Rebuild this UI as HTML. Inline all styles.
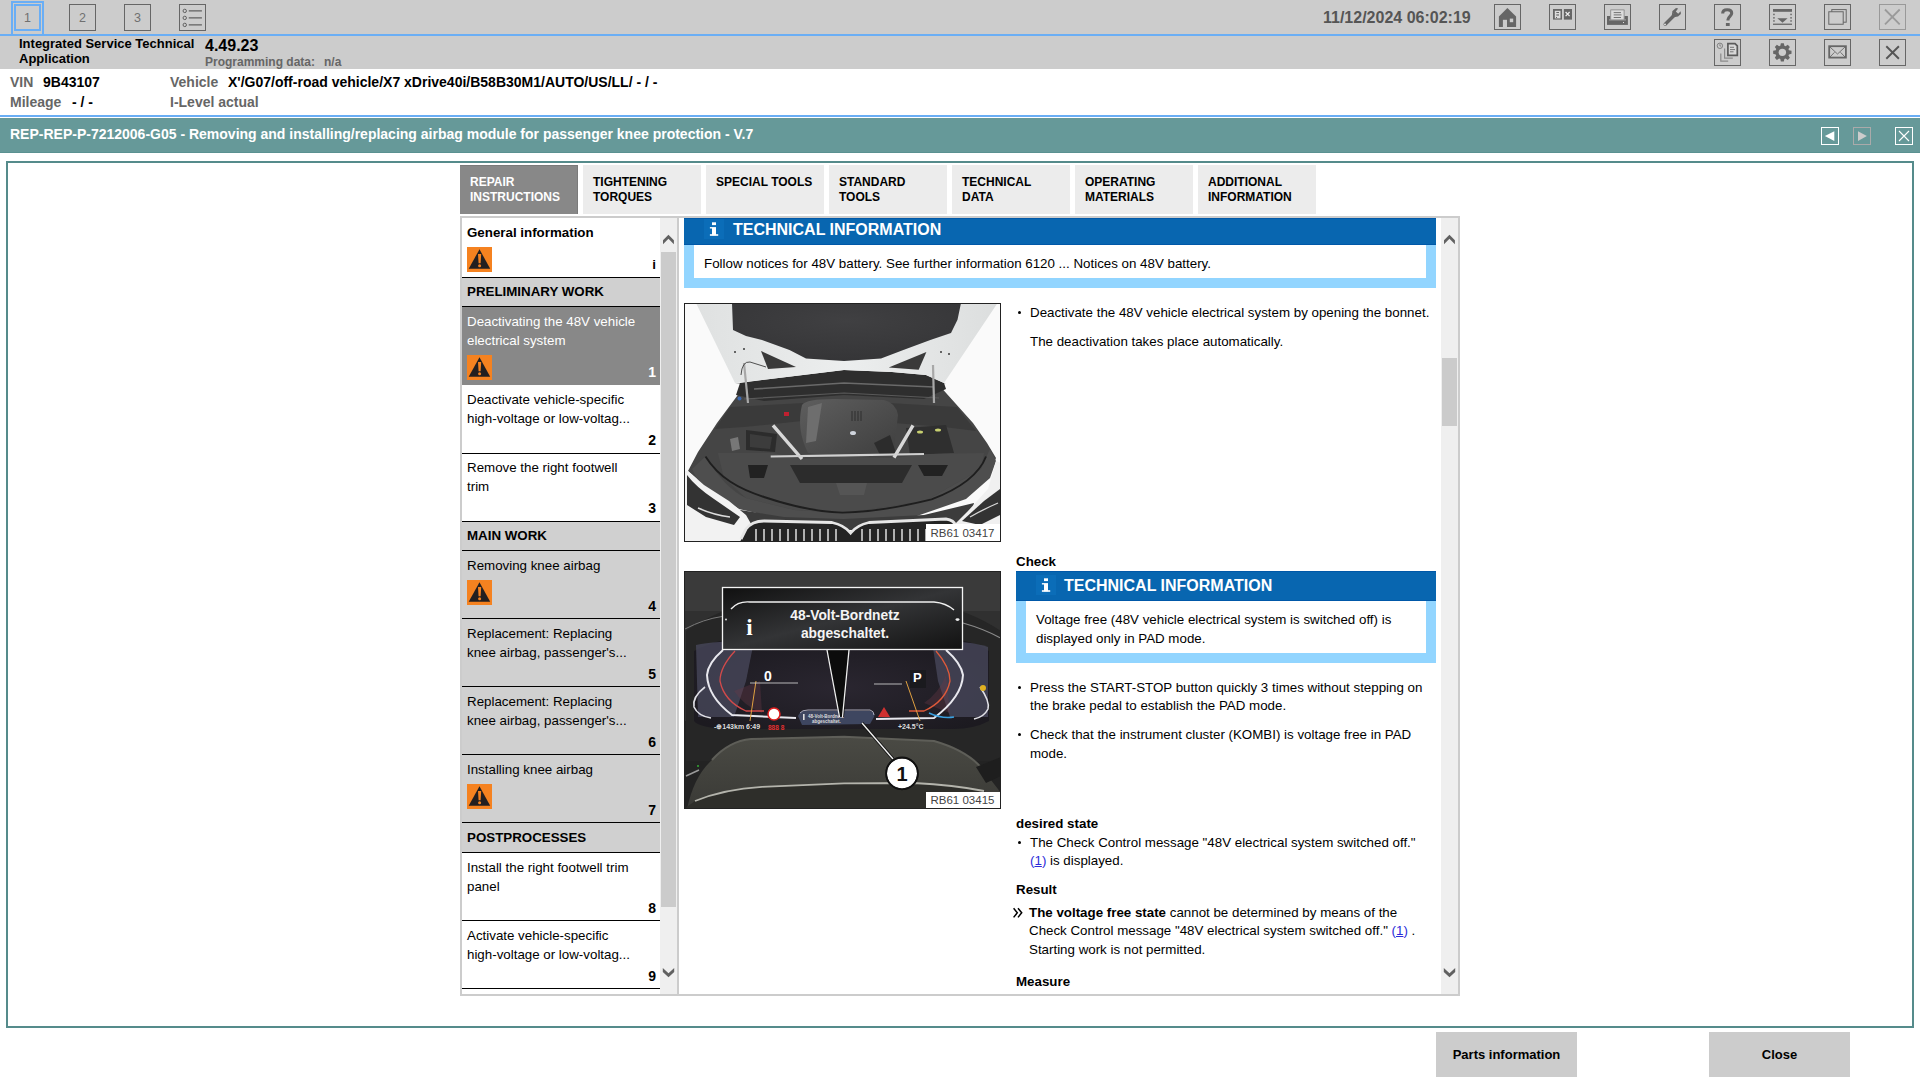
<!DOCTYPE html>
<html><head><meta charset="utf-8"><title>ISTA</title>
<style>
html,body{margin:0;padding:0;width:1920px;height:1080px;overflow:hidden;background:#fff;position:relative;font-family:"Liberation Sans",sans-serif}
body>div,body>svg{position:absolute;box-sizing:content-box}
.t{white-space:nowrap}
</style></head><body>
<div style="left:0px;top:0px;width:1920px;height:34px;background:#cccccc;"></div>
<div style="left:0px;top:34px;width:1920px;height:2px;background:#6aaef5;"></div>
<div style="left:0px;top:36px;width:1920px;height:33px;background:#cccccc;"></div>
<div style="left:0px;top:115px;width:1920px;height:2px;background:#6aaef5;"></div>
<div style="left:0px;top:118px;width:1920px;height:34px;background:#669999;"></div>
<div style="left:0px;top:152px;width:1920px;height:1px;background:#5a9191;"></div>
<div style="left:11px;top:1px;width:29px;height:31px;border:2px solid #6aaef5"></div>
<div style="left:14px;top:4px;width:23px;height:23px;border:2px solid #6aaef5"></div>
<div class="t" style="left:24px;top:12px;font-size:12.5px;line-height:12.5px;color:#707070;">1</div>
<div style="left:69px;top:4px;width:25px;height:25px;border:1px solid #666"></div>
<div class="t" style="left:79px;top:12px;font-size:12.5px;line-height:12.5px;color:#707070;">2</div>
<div style="left:124px;top:4px;width:25px;height:25px;border:1px solid #666"></div>
<div class="t" style="left:134px;top:12px;font-size:12.5px;line-height:12.5px;color:#707070;">3</div>
<div style="left:179px;top:4px;width:25px;height:25px;border:1px solid #666"></div>
<svg style="left:179px;top:4px" width="27" height="27" viewBox="0 0 27 27"><g fill="none" stroke="#606060" stroke-width="1"><circle cx="5.75" cy="6.9" r="1.7"/><circle cx="5.75" cy="13.9" r="1.7"/><circle cx="5.75" cy="20.9" r="1.7"/><path d="M9.75 6.9H22.9M9.75 13.9H22.9M9.75 20.9H22.9" stroke-width="1.1"/></g></svg>
<div class="t" style="left:19px;top:37px;font-size:13px;line-height:13px;font-weight:bold;color:#000;">Integrated Service Technical</div>
<div class="t" style="left:19px;top:52px;font-size:13px;line-height:13px;font-weight:bold;color:#000;">Application</div>
<div class="t" style="left:205px;top:38px;font-size:16px;line-height:16px;font-weight:bold;color:#000;">4.49.23</div>
<div class="t" style="left:205px;top:56px;font-size:12px;line-height:12px;font-weight:bold;color:#666;">Programming data:</div>
<div class="t" style="left:324px;top:56px;font-size:12px;line-height:12px;font-weight:bold;color:#666;">n/a</div>
<div class="t" style="left:1323px;top:10px;font-size:16px;line-height:16px;font-weight:bold;color:#555;">11/12/2024 06:02:19</div>
<div class="t" style="left:10px;top:75px;font-size:14px;line-height:14px;font-weight:bold;color:#666;">VIN</div>
<div class="t" style="left:43px;top:75px;font-size:14px;line-height:14px;font-weight:bold;color:#000;">9B43107</div>
<div class="t" style="left:10px;top:95px;font-size:14px;line-height:14px;font-weight:bold;color:#666;">Mileage</div>
<div class="t" style="left:72px;top:95px;font-size:14px;line-height:14px;font-weight:bold;color:#000;">- / -</div>
<div class="t" style="left:170px;top:75px;font-size:14px;line-height:14px;font-weight:bold;color:#666;">Vehicle</div>
<div class="t" style="left:228px;top:75px;font-size:14px;line-height:14px;font-weight:bold;color:#000;">X'/G07/off-road vehicle/X7 xDrive40i/B58B30M1/AUTO/US/LL/ - / -</div>
<div class="t" style="left:170px;top:95px;font-size:14px;line-height:14px;font-weight:bold;color:#666;">I-Level actual</div>
<div style="left:1494px;top:4px;width:25px;height:24px;border:1px solid #666"></div>
<div style="left:1549px;top:4px;width:25px;height:24px;border:1px solid #666"></div>
<div style="left:1604px;top:4px;width:25px;height:24px;border:1px solid #666"></div>
<div style="left:1659px;top:4px;width:25px;height:24px;border:1px solid #666"></div>
<div style="left:1714px;top:4px;width:25px;height:24px;border:1px solid #666"></div>
<div style="left:1769px;top:4px;width:25px;height:24px;border:1px solid #666"></div>
<div style="left:1824px;top:4px;width:25px;height:24px;border:1px solid #666"></div>
<div style="left:1879px;top:4px;width:25px;height:24px;border:1px solid #999"></div>
<div style="left:1714px;top:39px;width:25px;height:25px;border:1px solid #666"></div>
<div style="left:1769px;top:39px;width:25px;height:25px;border:1px solid #666"></div>
<div style="left:1824px;top:39px;width:25px;height:25px;border:1px solid #666"></div>
<div style="left:1879px;top:39px;width:25px;height:25px;border:1px solid #666"></div>
<svg style="left:1494px;top:4px" width="27" height="27" viewBox="0 0 27 27"><path d="M13.4 3.9L22.1 12.4V22.9H4.9V12.4Z" fill="#666"/><rect x="8.9" y="15.8" width="4.1" height="7.2" fill="#cccccc"/><rect x="15.8" y="14.6" width="3.4" height="3.6" fill="#cccccc"/></svg>
<svg style="left:1549px;top:4px" width="27" height="27" viewBox="0 0 27 27"><rect x="4" y="5" width="9" height="10.6" fill="#666"/><rect x="5.8" y="6.8" width="5.7" height="7.6" fill="#dcdcdc"/><rect x="7.3" y="8" width="2.7" height="1" fill="#666"/><rect x="7.3" y="10" width="2.7" height="2" fill="#999"/><rect x="7" y="13" width="1" height="1" fill="#666"/><rect x="14.9" y="5" width="8.1" height="10.6" fill="#666"/><path d="M16.6 8L20.6 12.2M20.6 8L16.6 12.2" stroke="#eee" stroke-width="1.2"/></svg>
<svg style="left:1604px;top:4px" width="27" height="27" viewBox="0 0 27 27"><rect x="3" y="12" width="20.9" height="8.9" fill="#666"/><rect x="6.1" y="5.3" width="14.6" height="10.3" rx="1" fill="#9a9a9a"/><rect x="7.2" y="6.4" width="12.4" height="9.2" fill="#dcdcdc"/><path d="M9.7 8.6H17M9.7 10.9H17.5M9.7 13.5H17" stroke="#666" stroke-width="0.9"/><rect x="5" y="15.4" width="16.9" height="1" fill="#aaa"/><rect x="19" y="18" width="1" height="1" fill="#ddd"/></svg>
<svg style="left:1659px;top:4px" width="27" height="27" viewBox="0 0 27 27"><path d="M6.2 20.2L15.5 11" stroke="#666" stroke-width="3.4" stroke-linecap="round"/><path d="M13.2 7.2L17 4.1L19.2 4.6L16.8 7.4L19.2 9.8L21.7 7.3L21.9 9.9L19 12.6L16 13Z" fill="#666"/><path d="M13.4 7.2L16.0 13L12.5 13.5Z" fill="#666"/><circle cx="6" cy="20.4" r="1" fill="#ddd"/></svg>
<svg style="left:1714px;top:4px" width="27" height="27" viewBox="0 0 27 27"><path d="M8.7 9.6C8.7 6.8 10.8 5.75 13.2 5.75C15.8 5.75 17.7 7 17.7 9.3C17.7 12 14 12.6 14 15.6V16.4" fill="none" stroke="#666" stroke-width="3.1"/><rect x="11.9" y="19" width="3.8" height="3" fill="#666"/></svg>
<svg style="left:1769px;top:4px" width="27" height="27" viewBox="0 0 27 27"><rect x="4" y="5" width="19" height="2.8" fill="#666"/><g fill="#666"><rect x="4.2" y="9.7" width="1.5" height="1.5"/><rect x="4.2" y="13.1" width="1.5" height="1.5"/><rect x="4.2" y="16.2" width="1.5" height="1.5"/><rect x="21.3" y="9.7" width="1.5" height="1.5"/><rect x="21.3" y="13.1" width="1.5" height="1.5"/><rect x="21.3" y="16.2" width="1.5" height="1.5"/></g><path d="M8.3 14.2H18.6L13.5 18.8Z" fill="#666"/><rect x="4" y="19.6" width="19" height="1.3" fill="#666"/></svg>
<svg style="left:1824px;top:4px" width="27" height="27" viewBox="0 0 27 27"><rect x="7.8" y="5.6" width="14.4" height="12.6" fill="none" stroke="#666" stroke-width="1"/><rect x="4.8" y="7.75" width="14.4" height="12.5" fill="#cccccc" stroke="#666" stroke-width="1"/></svg>
<svg style="left:1879px;top:4px" width="27" height="27" viewBox="0 0 27 27"><path d="M6 5.5L20.7 20.3M20.7 5.5L6 20.3" stroke="#9a9a9a" stroke-width="1.8"/></svg>
<svg style="left:1714px;top:39px" width="27" height="27" viewBox="0 0 27 27"><circle cx="5.9" cy="6.8" r="2.7" fill="none" stroke="#808080" stroke-width="1"/><path d="M5.9 5.2V7H7.2" stroke="#808080" stroke-width="0.9" fill="none"/><path d="M10.6 9.6V19.1H18.8" fill="none" stroke="#8a8a8a" stroke-width="1.2"/><path d="M6.8 14.4V22.2H14.2" fill="none" stroke="#8a8a8a" stroke-width="1.2"/><path d="M13.9 4.6H21L23.3 6.9V16.4H13.9Z" fill="#d8d8d8" stroke="#5a5a5a" stroke-width="1.7"/><path d="M16 8.3H20M16 10.6H21M16 12.8H19.5" stroke="#777" stroke-width="1"/></svg>
<svg style="left:1769px;top:39px" width="27" height="27" viewBox="0 0 27 27"><path d="M22.52 11.86L22.52 14.82L19.93 15.38L19.44 16.56L20.88 18.78L18.78 20.88L16.56 19.44L15.38 19.93L14.82 22.52L11.86 22.52L11.30 19.93L10.12 19.44L7.90 20.88L5.80 18.78L7.24 16.56L6.75 15.38L4.16 14.82L4.16 11.86L6.75 11.30L7.24 10.12L5.80 7.90L7.90 5.80L10.12 7.24L11.30 6.75L11.86 4.16L14.82 4.16L15.38 6.75L16.56 7.24L18.78 5.80L20.88 7.90L19.44 10.12L19.93 11.30Z" fill="#666"/><circle cx="13.34" cy="13.34" r="3.7" fill="#cccccc"/></svg>
<svg style="left:1824px;top:39px" width="27" height="27" viewBox="0 0 27 27"><rect x="5.2" y="7.2" width="16.7" height="11.4" fill="none" stroke="#666" stroke-width="1.8"/><path d="M6 8L13.5 15L21 8M6 18L10.5 13.3M21 18L16.5 13.3" fill="none" stroke="#666" stroke-width="0.9"/></svg>
<svg style="left:1879px;top:39px" width="27" height="27" viewBox="0 0 27 27"><path d="M7.3 7.3L19.9 19.7M19.9 7.3L7.3 19.7" stroke="#555" stroke-width="1.9"/></svg>
<div class="t" style="left:10px;top:127px;font-size:14px;line-height:14px;font-weight:bold;color:#fff;">REP-REP-P-7212006-G05 - Removing and installing/replacing airbag module for passenger knee protection - V.7</div>
<div style="left:1821px;top:127px;width:16px;height:16px;border:1px solid #fff"></div>
<div style="left:1853px;top:127px;width:16px;height:16px;border:1px solid #aaa"></div>
<div style="left:1895px;top:127px;width:16px;height:16px;border:1px solid #fff"></div>
<svg style="left:1821px;top:127px" width="18" height="18"><path d="M3.9 9.1L13.3 4.2V14Z" fill="#fff"/></svg>
<svg style="left:1853px;top:127px" width="18" height="18"><path d="M13.9 9.1L5 4.2V14Z" fill="#ccc"/></svg>
<svg style="left:1895px;top:127px" width="18" height="18"><path d="M4 4L14 14M14 4L4 14" stroke="#fff" stroke-width="1.1"/></svg>
<div style="left:6px;top:161px;width:1904px;height:863px;border:2px solid #558b8b"></div>
<div style="left:1436px;top:1032px;width:141px;height:45px;background:#cccccc;"></div>
<div style="left:1709px;top:1032px;width:141px;height:45px;background:#cccccc;"></div>
<div class="t" style="left:1436px;top:1048px;width:141px;text-align:center;font-size:13px;line-height:13px;font-weight:bold">Parts information</div>
<div class="t" style="left:1709px;top:1048px;width:141px;text-align:center;font-size:13px;line-height:13px;font-weight:bold">Close</div>
<div style="left:460px;top:165px;width:118px;height:49px;background:#888888;box-shadow:inset -1px 1px 0 #7a7a7a"></div>
<div class="t" style="left:470px;top:176px;font-size:12px;line-height:12px;font-weight:bold;color:#fff;">REPAIR</div>
<div class="t" style="left:470px;top:191px;font-size:12px;line-height:12px;font-weight:bold;color:#fff;">INSTRUCTIONS</div>
<div style="left:583px;top:165px;width:118px;height:49px;background:#ececec;"></div>
<div class="t" style="left:593px;top:176px;font-size:12px;line-height:12px;font-weight:bold;color:#000;">TIGHTENING</div>
<div class="t" style="left:593px;top:191px;font-size:12px;line-height:12px;font-weight:bold;color:#000;">TORQUES</div>
<div style="left:706px;top:165px;width:118px;height:49px;background:#ececec;"></div>
<div class="t" style="left:716px;top:176px;font-size:12px;line-height:12px;font-weight:bold;color:#000;">SPECIAL TOOLS</div>
<div style="left:829px;top:165px;width:118px;height:49px;background:#ececec;"></div>
<div class="t" style="left:839px;top:176px;font-size:12px;line-height:12px;font-weight:bold;color:#000;">STANDARD</div>
<div class="t" style="left:839px;top:191px;font-size:12px;line-height:12px;font-weight:bold;color:#000;">TOOLS</div>
<div style="left:952px;top:165px;width:118px;height:49px;background:#ececec;"></div>
<div class="t" style="left:962px;top:176px;font-size:12px;line-height:12px;font-weight:bold;color:#000;">TECHNICAL</div>
<div class="t" style="left:962px;top:191px;font-size:12px;line-height:12px;font-weight:bold;color:#000;">DATA</div>
<div style="left:1075px;top:165px;width:118px;height:49px;background:#ececec;"></div>
<div class="t" style="left:1085px;top:176px;font-size:12px;line-height:12px;font-weight:bold;color:#000;">OPERATING</div>
<div class="t" style="left:1085px;top:191px;font-size:12px;line-height:12px;font-weight:bold;color:#000;">MATERIALS</div>
<div style="left:1198px;top:165px;width:118px;height:49px;background:#ececec;"></div>
<div class="t" style="left:1208px;top:176px;font-size:12px;line-height:12px;font-weight:bold;color:#000;">ADDITIONAL</div>
<div class="t" style="left:1208px;top:191px;font-size:12px;line-height:12px;font-weight:bold;color:#000;">INFORMATION</div>
<div style="left:460px;top:216px;width:996px;height:776px;border:2px solid #cccccc;background:#fff"></div>
<div style="left:660px;top:218px;width:17px;height:776px;background:#efefef;"></div>
<div style="left:661px;top:252px;width:15px;height:655px;background:#cbcbcb;"></div>
<div style="left:677px;top:218px;width:2px;height:776px;background:#cccccc;"></div>
<svg style="left:660px;top:232px" width="17" height="14"><path d="M3 12.2L8.45 6.8L13.9 12.2V8.2L8.45 2.8L3 8.2Z" fill="#616161"/></svg>
<svg style="left:660px;top:964px" width="17" height="14"><path d="M2.8 3.9L8.5 9.3L14.2 3.9V7.9L8.5 13.3L2.8 7.9Z" fill="#616161"/></svg>
<div style="left:1441px;top:218px;width:17px;height:776px;background:#efefef;"></div>
<div style="left:1442px;top:358px;width:15px;height:68px;background:#cbcbcb;"></div>
<svg style="left:1441px;top:232px" width="17" height="14"><path d="M3 12.2L8.45 6.8L13.9 12.2V8.2L8.45 2.8L3 8.2Z" fill="#616161"/></svg>
<svg style="left:1441px;top:964px" width="17" height="14"><path d="M2.8 3.9L8.5 9.3L14.2 3.9V7.9L8.5 13.3L2.8 7.9Z" fill="#616161"/></svg>
<div class="t" style="left:467px;top:226px;font-size:13.333px;line-height:13.333px;font-weight:bold;color:#000;">General information</div>
<svg style="left:467px;top:247px" width="25" height="25" viewBox="0 0 25 25"><rect width="25" height="25" fill="#f58220"/><path d="M12.5 2.3L23.2 21.7H1.7Z" fill="#231f20"/><path d="M11 7h3.2l-0.6 9.3h-2Z" fill="#f58220"/><circle cx="12.6" cy="18.7" r="1.5" fill="#f58220"/></svg>
<div class="t" style="right:1264px;top:258px;font-size:13.333px;line-height:13.333px;font-weight:bold;color:#000;">i</div>
<div style="left:462px;top:277px;width:198px;height:1px;background:#000;"></div>
<div style="left:462px;top:278px;width:198px;height:28px;background:#d0d0d0;"></div>
<div class="t" style="left:467px;top:285px;font-size:13.333px;line-height:13.333px;font-weight:bold;color:#000;">PRELIMINARY WORK</div>
<div style="left:462px;top:306px;width:198px;height:1px;background:#000;"></div>
<div style="left:462px;top:307px;width:198px;height:78px;background:#888888;"></div>
<div class="t" style="left:467px;top:315px;font-size:13.333px;line-height:13.333px;color:#fff;">Deactivating the 48V vehicle</div>
<div class="t" style="left:467px;top:334px;font-size:13.333px;line-height:13.333px;color:#fff;">electrical system</div>
<svg style="left:467px;top:355px" width="25" height="25" viewBox="0 0 25 25"><rect width="25" height="25" fill="#f58220"/><path d="M12.5 2.3L23.2 21.7H1.7Z" fill="#231f20"/><path d="M11 7h3.2l-0.6 9.3h-2Z" fill="#f58220"/><circle cx="12.6" cy="18.7" r="1.5" fill="#f58220"/></svg>
<div class="t" style="right:1264px;top:365px;font-size:14px;line-height:14px;font-weight:bold;color:#fff;">1</div>
<div class="t" style="left:467px;top:393px;font-size:13.333px;line-height:13.333px;color:#000;">Deactivate vehicle-specific</div>
<div class="t" style="left:467px;top:412px;font-size:13.333px;line-height:13.333px;color:#000;">high-voltage or low-voltag...</div>
<div class="t" style="right:1264px;top:433px;font-size:14px;line-height:14px;font-weight:bold;color:#000;">2</div>
<div style="left:462px;top:453px;width:198px;height:1px;background:#000;"></div>
<div class="t" style="left:467px;top:461px;font-size:13.333px;line-height:13.333px;color:#000;">Remove the right footwell</div>
<div class="t" style="left:467px;top:480px;font-size:13.333px;line-height:13.333px;color:#000;">trim</div>
<div class="t" style="right:1264px;top:501px;font-size:14px;line-height:14px;font-weight:bold;color:#000;">3</div>
<div style="left:462px;top:521px;width:198px;height:1px;background:#000;"></div>
<div style="left:462px;top:522px;width:198px;height:28px;background:#d0d0d0;"></div>
<div class="t" style="left:467px;top:529px;font-size:13.333px;line-height:13.333px;font-weight:bold;color:#000;">MAIN WORK</div>
<div style="left:462px;top:550px;width:198px;height:1px;background:#000;"></div>
<div style="left:462px;top:551px;width:198px;height:67px;background:#d0d0d0;"></div>
<div class="t" style="left:467px;top:559px;font-size:13.333px;line-height:13.333px;color:#000;">Removing knee airbag</div>
<svg style="left:467px;top:580px" width="25" height="25" viewBox="0 0 25 25"><rect width="25" height="25" fill="#f58220"/><path d="M12.5 2.3L23.2 21.7H1.7Z" fill="#231f20"/><path d="M11 7h3.2l-0.6 9.3h-2Z" fill="#f58220"/><circle cx="12.6" cy="18.7" r="1.5" fill="#f58220"/></svg>
<div class="t" style="right:1264px;top:599px;font-size:14px;line-height:14px;font-weight:bold;color:#000;">4</div>
<div style="left:462px;top:618px;width:198px;height:1px;background:#000;"></div>
<div style="left:462px;top:619px;width:198px;height:67px;background:#d0d0d0;"></div>
<div class="t" style="left:467px;top:627px;font-size:13.333px;line-height:13.333px;color:#000;">Replacement: Replacing</div>
<div class="t" style="left:467px;top:646px;font-size:13.333px;line-height:13.333px;color:#000;">knee airbag, passenger's...</div>
<div class="t" style="right:1264px;top:667px;font-size:14px;line-height:14px;font-weight:bold;color:#000;">5</div>
<div style="left:462px;top:686px;width:198px;height:1px;background:#000;"></div>
<div style="left:462px;top:687px;width:198px;height:67px;background:#d0d0d0;"></div>
<div class="t" style="left:467px;top:695px;font-size:13.333px;line-height:13.333px;color:#000;">Replacement: Replacing</div>
<div class="t" style="left:467px;top:714px;font-size:13.333px;line-height:13.333px;color:#000;">knee airbag, passenger's...</div>
<div class="t" style="right:1264px;top:735px;font-size:14px;line-height:14px;font-weight:bold;color:#000;">6</div>
<div style="left:462px;top:754px;width:198px;height:1px;background:#000;"></div>
<div style="left:462px;top:755px;width:198px;height:67px;background:#d0d0d0;"></div>
<div class="t" style="left:467px;top:763px;font-size:13.333px;line-height:13.333px;color:#000;">Installing knee airbag</div>
<svg style="left:467px;top:784px" width="25" height="25" viewBox="0 0 25 25"><rect width="25" height="25" fill="#f58220"/><path d="M12.5 2.3L23.2 21.7H1.7Z" fill="#231f20"/><path d="M11 7h3.2l-0.6 9.3h-2Z" fill="#f58220"/><circle cx="12.6" cy="18.7" r="1.5" fill="#f58220"/></svg>
<div class="t" style="right:1264px;top:803px;font-size:14px;line-height:14px;font-weight:bold;color:#000;">7</div>
<div style="left:462px;top:822px;width:198px;height:1px;background:#000;"></div>
<div style="left:462px;top:823px;width:198px;height:29px;background:#d0d0d0;"></div>
<div class="t" style="left:467px;top:831px;font-size:13.333px;line-height:13.333px;font-weight:bold;color:#000;">POSTPROCESSES</div>
<div style="left:462px;top:852px;width:198px;height:1px;background:#000;"></div>
<div class="t" style="left:467px;top:861px;font-size:13.333px;line-height:13.333px;color:#000;">Install the right footwell trim</div>
<div class="t" style="left:467px;top:880px;font-size:13.333px;line-height:13.333px;color:#000;">panel</div>
<div class="t" style="right:1264px;top:901px;font-size:14px;line-height:14px;font-weight:bold;color:#000;">8</div>
<div style="left:462px;top:920px;width:198px;height:1px;background:#000;"></div>
<div class="t" style="left:467px;top:929px;font-size:13.333px;line-height:13.333px;color:#000;">Activate vehicle-specific</div>
<div class="t" style="left:467px;top:948px;font-size:13.333px;line-height:13.333px;color:#000;">high-voltage or low-voltag...</div>
<div class="t" style="right:1264px;top:969px;font-size:14px;line-height:14px;font-weight:bold;color:#000;">9</div>
<div style="left:462px;top:988px;width:198px;height:1px;background:#000;"></div>
<div style="left:684px;top:218px;width:752px;height:27px;background:#0866b0;border-top:1px solid #0058a8;border-bottom:1px solid #0058a8;height:25px"></div>
<svg style="left:704px;top:219px" width="20" height="20" viewBox="0 0 20 20"><rect width="20" height="20" fill="#0b6db8"/><g fill="#fff"><rect x="8" y="3.3" width="4" height="2.8"/><rect x="8" y="8.1" width="4" height="8.2"/><rect x="5.9" y="8.1" width="2.2" height="1.4"/><rect x="5.9" y="15.2" width="8.3" height="1.6"/></g></svg>
<div class="t" style="left:733px;top:222px;font-size:16px;line-height:16px;font-weight:bold;color:#fff;">TECHNICAL INFORMATION</div>
<div style="left:684px;top:245px;width:752px;height:43px;background:#92d5ff;"></div>
<div style="left:694px;top:245px;width:732px;height:33px;background:#ffffff;"></div>
<div class="t" style="left:704px;top:257px;font-size:13.333px;line-height:13.333px;color:#000;">Follow notices for 48V battery. See further information 6120 ... Notices on 48V battery.</div>
<svg style="left:684px;top:303px" width="317" height="239" viewBox="0 0 317 239"><defs><linearGradient id="hoodg" x1="0" y1="0" x2="1" y2="0"><stop offset="0" stop-color="#dfe1e1"/><stop offset="0.5" stop-color="#eceeee"/><stop offset="1" stop-color="#dcdede"/></linearGradient><radialGradient id="insg" cx="0.5" cy="0.3" r="0.7"><stop offset="0" stop-color="#404042"/><stop offset="1" stop-color="#353537"/></radialGradient><linearGradient id="engg" x1="0" y1="0" x2="1" y2="1"><stop offset="0" stop-color="#5e5e5e"/><stop offset="1" stop-color="#3e3e3e"/></linearGradient></defs><rect width="317" height="239" fill="#fafafa"/><path d="M51 80L62 81L33 120L14 149L4 168L20 182L60 205L100 214L160 216L230 212L280 192L306 170L312 155L303 140L289 120L254 81L262 80Z" fill="#454545"/><path d="M56 80L78 77L160 67L208 69L242 72L260 80L262 86L240 96L160 92L80 98L52 92Z" fill="#2e2e2e"/><path d="M70 86L160 80L250 84" fill="none" stroke="#6a6a6a" stroke-width="1.6"/><path d="M60 96L160 90L255 95" fill="none" stroke="#5a5a5a" stroke-width="1.2"/><path d="M12 0L313.6 0L260 80L242 72L208 69L160 67L78 77L51 80Z" fill="url(#hoodg)"/><path d="M48 0L49 27L62 33L78 37L105.5 47L122 55.5L160 58L197 55.5L220 46.7L247 36.7L267 30L273.5 16.7L277 0Z" fill="url(#insg)"/><path d="M77 48L112 64L84 66Z" fill="#3a3a3a"/><path d="M204.7 64.4L242.4 49L234.7 66.7Z" fill="#3a3a3a"/><g fill="#3a3a3a"><circle cx="51" cy="49" r="1"/><circle cx="60" cy="46" r="1"/><circle cx="257" cy="49" r="1"/><circle cx="265" cy="51" r="1"/></g><path d="M60 60L64 100" stroke="#a8a8a8" stroke-width="2.2"/><path d="M249 62L250 100" stroke="#a8a8a8" stroke-width="2.2"/><path d="M57 72Q58 58 66 59L82 64" fill="none" stroke="#2a2a2a" stroke-width="0.8"/><path d="M46 104L120 100L118 118L60 124L31 126Z" fill="#3a3a3a"/><path d="M205 100L273 104L292 128L260 124L210 120Z" fill="#3a3a3a"/><circle cx="55.5" cy="95.5" r="2" fill="#3a68b0"/><rect x="100" y="109" width="5" height="4" fill="#c02030"/><path d="M118 102Q122 96 150 96L200 97Q212 100 214 112L210 146Q196 154 160 154L124 150Q112 126 118 102Z" fill="url(#engg)"/><path d="M124 104L138 100L132 138L122 140Z" fill="#6e6e6e"/><g stroke="#2e2e2e" stroke-width="1"><path d="M168 108v10M171 108v10M174 108v10M177 108v10"/></g><ellipse cx="169" cy="130" rx="3" ry="2" fill="#cfd4dc"/><path d="M190 140L206 132L212 150L196 152Z" fill="#2c2c2c"/><path d="M62 127L93 131L91 149L62 147Z" fill="#2c2c2c"/><path d="M66 131L88 134L86 146L66 144Z" fill="#3c3c3c"/><path d="M46 136L54 134L56 146L48 148Z" fill="#777"/><path d="M222 125L262 122L270 150L226 152Z" fill="#2f2f2f"/><ellipse cx="236" cy="129" rx="3" ry="1.5" fill="#c8d070"/><ellipse cx="254" cy="127" rx="3" ry="1.5" fill="#c8d070"/><path d="M22 153Q40 185 62 195L111 207L160 210L241 198L297 166L306 146L312 158L306 175L282 196L230 214L160 218L98 216L55 206L16 182L8 166Z" fill="#4e4e4e"/><path d="M34 150L89 150L118 156L160 154L210 155L244 151L300 150L297 166L241 198L160 210L111 207L62 195L40 175Z" fill="#4b4b4b"/><path d="M106 162L228 162L218 180L116 180Z" fill="#2c2c2c"/><path d="M152 180L183 180L180 192L156 192Z" fill="#555"/><path d="M64 162L84 162L80 175L66 175Z" fill="#222"/><path d="M234 162L264 162L258 173L240 173Z" fill="#222"/><path d="M21.5 153.5C35 175 55 186 80 194C110 204 135 209 158.5 209.6C190 209 225 202 247.6 196.4C275 186 295 172 302 153.5" fill="none" stroke="#1e1e1e" stroke-width="1.9"/><path d="M89 122.4L118 156M229 122.4L210 154.7" stroke="#d8d8d8" stroke-width="3.4" fill="none"/><path d="M86.7 153.5L160 152.4L240 151" stroke="#d0d0d0" stroke-width="2.2" fill="none"/><path d="M50 206L100 214L160 216L240 212L290 200L284 226L56 228Z" fill="#3c3c3c"/><path d="M0 168L4 168L20 182L45 198L62 212L70 226L64 239L0 239Z" fill="#f2f2f2"/><path d="M3 172Q12 184 30 196L56 214L50 222L22 214L3 202Z" fill="#333"/><path d="M14 205Q30 212 46 214" fill="none" stroke="#dcdcdc" stroke-width="1.4"/><path d="M317 160L317 239L280 239L268 224L284 208L304 186L312 158Z" fill="#f0f0f0"/><path d="M278 218L300 198L316 186L316 212L296 222Z" fill="#333"/><path d="M286 214Q300 206 314 200" fill="none" stroke="#d8d8d8" stroke-width="1.3"/><path d="M56 239L62 226Q68 218 80 218L148 219.5Q160 222 166.7 230Q173 222 185 219.5L262 216Q270 217 272 223L274 239Z" fill="#242424"/><path d="M57 236L62 226Q68 218 80 218L148 219.5Q160 222 166.7 230Q173 222 185 219.5L262 216Q270 217 272 223" fill="none" stroke="#e6e6e6" stroke-width="2.8"/><path d="M72 226V239M80 226V239M88 226V239M96 226V239M104 226V239M112 226V239M120 226V239M128 226V239M136 226V239M144 226V239M152 226V239M178 226V239M186 226V239M194 226V239M202 226V239M210 226V239M218 226V239M226 226V239M234 226V239M242 226V239M250 226V239M258 226V239M266 226V239" stroke="#b0b0b0" stroke-width="2"/><rect x="242" y="221" width="74" height="17" fill="#fff"/><text x="246.5" y="233.6" font-family="Liberation Sans" font-size="11.5" fill="#444">RB61 03417</text><rect x="0.5" y="0.5" width="316" height="238" fill="none" stroke="#222" stroke-width="1"/></svg>
<div style="left:1017.6px;top:310.5px;width:3.8px;height:3.8px;border-radius:50%;background:#000"></div>
<div class="t" style="left:1030px;top:306px;font-size:13.333px;line-height:13.333px;color:#000;">Deactivate the 48V vehicle electrical system by opening the bonnet.</div>
<div class="t" style="left:1030px;top:335px;font-size:13.333px;line-height:13.333px;color:#000;">The deactivation takes place automatically.</div>
<div class="t" style="left:1016px;top:555px;font-size:13.333px;line-height:13.333px;font-weight:bold;color:#000;">Check</div>
<div style="left:1016px;top:571px;width:420px;height:30px;background:#0866b0;border-top:1px solid #0058a8;border-bottom:1px solid #0058a8;height:28px"></div>
<svg style="left:1036px;top:575px" width="20" height="20" viewBox="0 0 20 20"><rect width="20" height="20" fill="#0b6db8"/><g fill="#fff"><rect x="8" y="3.3" width="4" height="2.8"/><rect x="8" y="8.1" width="4" height="8.2"/><rect x="5.9" y="8.1" width="2.2" height="1.4"/><rect x="5.9" y="15.2" width="8.3" height="1.6"/></g></svg>
<div class="t" style="left:1064px;top:578px;font-size:16px;line-height:16px;font-weight:bold;color:#fff;">TECHNICAL INFORMATION</div>
<div style="left:1016px;top:601px;width:420px;height:62px;background:#92d5ff;"></div>
<div style="left:1026px;top:601px;width:400px;height:52px;background:#ffffff;"></div>
<div class="t" style="left:1036px;top:613px;font-size:13.333px;line-height:13.333px;color:#000;">Voltage free (48V vehicle electrical system is switched off) is</div>
<div class="t" style="left:1036px;top:632px;font-size:13.333px;line-height:13.333px;color:#000;">displayed only in PAD mode.</div>
<svg style="left:684px;top:571px" width="317" height="238" viewBox="0 0 317 238"><defs><radialGradient id="scr" cx="0.5" cy="0.55" r="0.6"><stop offset="0" stop-color="#2a2630"/><stop offset="1" stop-color="#1c1a20"/></radialGradient><linearGradient id="callg" x1="0" y1="0" x2="1" y2="1"><stop offset="0" stop-color="#101010"/><stop offset="0.5" stop-color="#333436"/><stop offset="1" stop-color="#121212"/></linearGradient><linearGradient id="dash" x1="0" y1="0" x2="0" y2="1"><stop offset="0" stop-color="#4a4a44"/><stop offset="1" stop-color="#3a3a36"/></linearGradient></defs><rect width="317" height="238" fill="#303030"/><rect width="317" height="40" fill="#3a3a3a"/><rect x="0" y="150" width="317" height="88" fill="#232323"/><path d="M2 60Q60 20 158 22Q260 22 317 60L317 190L2 190Z" fill="#262626"/><path d="M10 80Q40 64 80 66L240 66Q285 66 305 80L305 150Q290 158 270 158L40 158Q14 156 10 150Z" fill="url(#scr)"/><path d="M12 74Q30 70 70 70L62 110L50 146L14 146Z" fill="#4a4a5e" opacity="0.75"/><path d="M248 70Q288 70 304 76L304 146L266 146L254 110Z" fill="#4a4a5e" opacity="0.75"/><path d="M50 120Q60 135 78 142L76 110Z" fill="#6a3848" opacity="0.35"/><path d="M240 132Q255 122 262 104L266 142Z" fill="#6a3848" opacity="0.35"/><path d="M1 58Q20 48 38 45.5" fill="none" stroke="#7a7a7a" stroke-width="1"/><path d="M279 52Q300 58 316 66.7" fill="none" stroke="#8a8a8a" stroke-width="1.2"/><path d="M39 79Q24 92 23 104Q24 126 48 144L112 147" fill="none" stroke="#e8e8ee" stroke-width="2"/><path d="M51 80Q36 96 36 110Q40 130 62 140L80 140" fill="none" stroke="#d24a4a" stroke-width="1.3"/><path d="M21 116Q8 126 10 136Q14 145 27 147" fill="none" stroke="#e0e0e6" stroke-width="1.6"/><path d="M72 110L66 150" stroke="#e0a040" stroke-width="1"/><path d="M262 79Q277 92 279 104Q278 126 250 147L192 148" fill="none" stroke="#e8e8ee" stroke-width="2"/><path d="M252 80Q266 96 266 110Q262 130 240 140L225 140" fill="none" stroke="#e05a3a" stroke-width="1.3"/><path d="M296 116Q306 130 304 138Q300 146 290 148" fill="none" stroke="#e0e0e6" stroke-width="1.6"/><path d="M222 110L236 150" stroke="#e0a040" stroke-width="1"/><path d="M245 142Q258 148 270 146" stroke="#3aa0e0" stroke-width="1.5" fill="none"/><text x="80" y="110" font-family="Liberation Sans" font-weight="bold" font-size="14" fill="#fff">0</text><path d="M66 112H114" stroke="#ddd" stroke-width="0.8"/><rect x="226" y="99" width="16" height="18" fill="#1a1a1e"/><text x="229" y="111" font-family="Liberation Sans" font-weight="bold" font-size="13" fill="#fff">P</text><path d="M190 113H218" stroke="#ddd" stroke-width="0.8"/><text x="30" y="158" font-family="Liberation Sans" font-weight="bold" font-size="7" fill="#ddd">-⊕143km   6:49</text><circle cx="90" cy="143" r="6" fill="#fff" stroke="#e02020" stroke-width="1.5"/><text x="84" y="159" font-family="Liberation Sans" font-weight="bold" font-size="6.5" fill="#e03030">888 8</text><path d="M194 146L200 136L206 146Z" fill="#d03030"/><text x="214" y="158" font-family="Liberation Sans" font-weight="bold" font-size="7" fill="#ddd">+24.5°C</text><circle cx="299" cy="117" r="3" fill="#e0b020"/><path d="M114 145Q116 140 122 140L186 140Q192 142 190 146L186 153L118 154Z" fill="#3e4660"/><path d="M116 142Q118 139 124 139L186 139Q190 140 190 144" fill="none" stroke="#ccd" stroke-width="0.8"/><text x="124" y="146.5" font-family="Liberation Sans" font-weight="bold" font-size="4.5" fill="#ddd">48-Volt-Bordnetz</text><text x="128" y="151.5" font-family="Liberation Sans" font-weight="bold" font-size="4.5" fill="#ddd">abgeschaltet.</text><rect x="119" y="143" width="1.6" height="6" fill="#ddd"/><path d="M3 238Q10 205 28 189Q45 170 67 168L160 165.8L250 170Q285 180 300 200L317 222L317 238Z" fill="url(#dash)"/><path d="M28 189Q45 170 67 168L160 165.8L250 170Q285 180 300 200" fill="none" stroke="#5e5e58" stroke-width="2"/><path d="M0 238L11 230Q40 218 78 215.8L160 212.4L230 212Q270 214 300 220L317 230L317 238Z" fill="#2e2e2a"/><path d="M11 230Q40 218 78 215.8L160 212.4L230 212Q270 214 300 220" fill="none" stroke="#b4b4ac" stroke-width="1.8"/><path d="M292 196L317 186L317 205L302 212Z" fill="#1e1e1e"/><path d="M2 205L15 199" stroke="#9a9a9a" stroke-width="1.5"/><circle cx="14" cy="195" r="1" fill="#3a3"/><path d="M143 79L155 146L160 146L165 79Z" fill="#0c0c0c"/><path d="M143 79L155.5 146M165 79L158.5 146" stroke="#f0f0f0" stroke-width="1.3"/><rect x="38.5" y="16.5" width="240" height="62" fill="url(#callg)" stroke="#f4f4f4" stroke-width="1.3"/><path d="M47 38Q54 30 66 31L250 31Q262 32 270 39" fill="none" stroke="#f0f0f0" stroke-width="1.4"/><circle cx="42" cy="48.5" r="0.9" fill="#eee"/><ellipse cx="273.5" cy="48.6" rx="2" ry="1.3" fill="#eee"/><text x="65.5" y="64" text-anchor="middle" font-family="Liberation Serif" font-weight="bold" font-size="23" fill="#fff">i</text><g transform="translate(161 0) scale(0.92 1)"><text x="0" y="49" text-anchor="middle" font-family="Liberation Sans" font-weight="bold" font-size="15" fill="#f4f4f4">48-Volt-Bordnetz</text><text x="0" y="67" text-anchor="middle" font-family="Liberation Sans" font-weight="bold" font-size="15" fill="#f4f4f4">abgeschaltet.</text></g><path d="M178 152L209 188" stroke="#111" stroke-width="3.2"/><path d="M178 152L209 188" stroke="#f0f0f0" stroke-width="1.4"/><circle cx="218" cy="202.4" r="16.5" fill="#111"/><circle cx="218" cy="202.4" r="15" fill="#fff"/><circle cx="218" cy="202.4" r="15.9" fill="none" stroke="#111" stroke-width="1.8"/><text x="218" y="210" text-anchor="middle" font-family="Liberation Sans" font-weight="bold" font-size="20" fill="#111">1</text><rect x="242" y="221" width="74" height="16" fill="#fff"/><text x="246.5" y="232.8" font-family="Liberation Sans" font-size="11.5" fill="#444">RB61 03415</text><rect x="0.5" y="0.5" width="316" height="237" fill="none" stroke="#222" stroke-width="1"/></svg>
<div style="left:1017.6px;top:685.5px;width:3.8px;height:3.8px;border-radius:50%;background:#000"></div>
<div class="t" style="left:1030px;top:681px;font-size:13.333px;line-height:13.333px;color:#000;">Press the START-STOP button quickly 3 times without stepping on</div>
<div class="t" style="left:1030px;top:699px;font-size:13.333px;line-height:13.333px;color:#000;">the brake pedal to establish the PAD mode.</div>
<div style="left:1017.6px;top:732.5px;width:3.8px;height:3.8px;border-radius:50%;background:#000"></div>
<div class="t" style="left:1030px;top:728px;font-size:13.333px;line-height:13.333px;color:#000;">Check that the instrument cluster (KOMBI) is voltage free in PAD</div>
<div class="t" style="left:1030px;top:747px;font-size:13.333px;line-height:13.333px;color:#000;">mode.</div>
<div class="t" style="left:1016px;top:817px;font-size:13.333px;line-height:13.333px;font-weight:bold;color:#000;">desired state</div>
<div style="left:1017.6px;top:840.5px;width:3.8px;height:3.8px;border-radius:50%;background:#000"></div>
<div class="t" style="left:1030px;top:836px;font-size:13.333px;line-height:13.333px;color:#000;">The Check Control message "48V electrical system switched off."</div>
<div class="t" style="left:1030px;top:854px;font-size:13.333px;line-height:13.333px;color:#000;"><span style="color:#2b2bd9">(<u>1</u>)</span> is displayed.</div>
<div class="t" style="left:1016px;top:883px;font-size:13.333px;line-height:13.333px;font-weight:bold;color:#000;">Result</div>
<svg style="left:1010px;top:905px" width="16" height="16" viewBox="1010 905 16 16"><path d="M1013.6 908.2L1017.3 912.8L1013.6 917.4M1018 908.2L1021.7 912.8L1018 917.4" fill="none" stroke="#000" stroke-width="1.5"/></svg>
<div class="t" style="left:1029px;top:906px;font-size:13.333px;line-height:13.333px;color:#000;"><b>The voltage free state</b> cannot be determined by means of the</div>
<div class="t" style="left:1029px;top:924px;font-size:13.333px;line-height:13.333px;color:#000;">Check Control message "48V electrical system switched off." <span style="color:#2b2bd9">(<u>1</u>)</span> .</div>
<div class="t" style="left:1029px;top:943px;font-size:13.333px;line-height:13.333px;color:#000;">Starting work is not permitted.</div>
<div class="t" style="left:1016px;top:975px;font-size:13.333px;line-height:13.333px;font-weight:bold;color:#000;">Measure</div>
</body></html>
